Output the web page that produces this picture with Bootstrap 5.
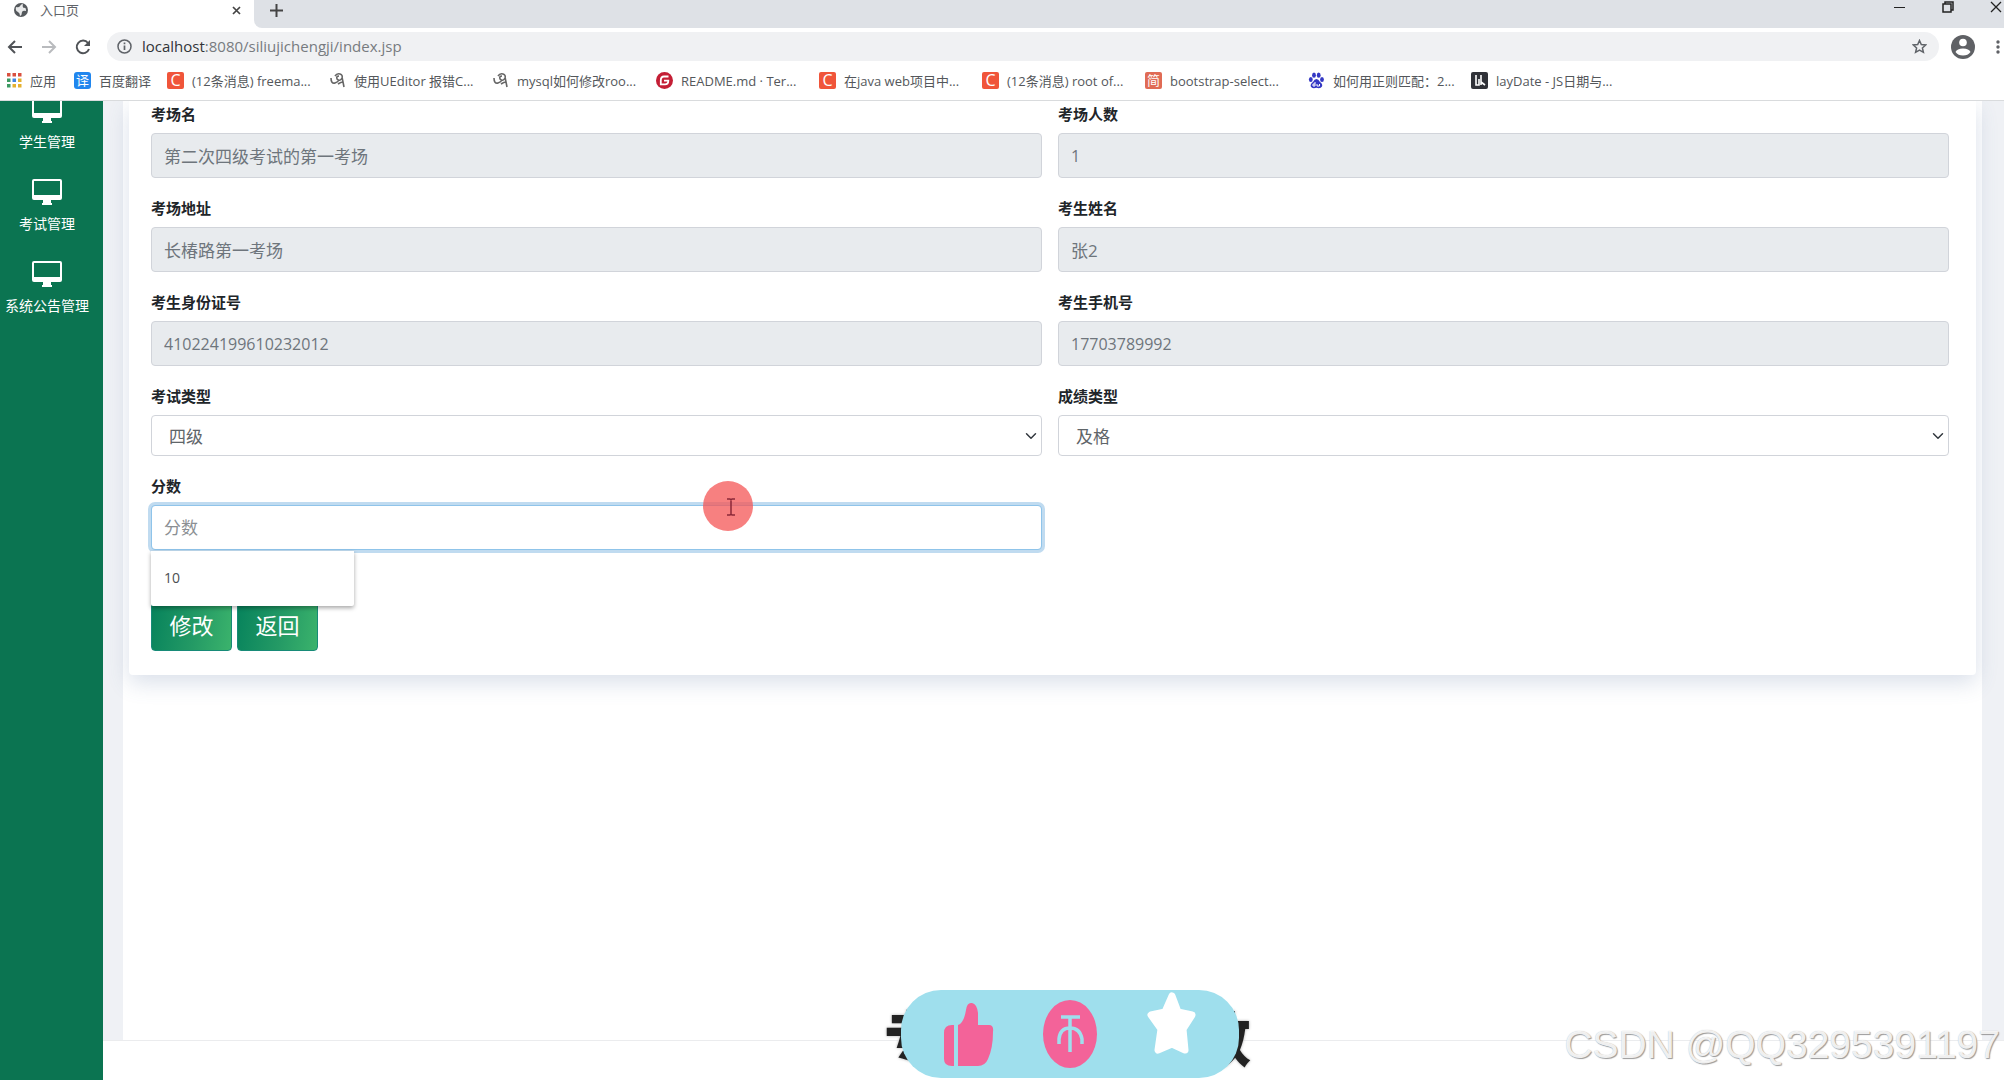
<!DOCTYPE html>
<html lang="zh-CN">
<head>
<meta charset="utf-8">
<meta name="viewport" content="width=device-width, initial-scale=1">
<title>入口页</title>
<link href="https://cdn.jsdelivr.net/npm/bootstrap@5.3.0/dist/css/bootstrap.min.css" rel="stylesheet">
<style>
body { font-family: "Open Sans", "Noto Sans CJK SC", sans-serif; background: #fff; color: #212529; overflow: hidden; }
svg { display: block; flex: none; }
.plain-btn { border: 0; background: none; padding: 0; }
/* browser frame */
.tab-strip { height: 28px; background: #dee1e6; position: relative; }
.tab-active { width: 254px; background: #fff; font-size: 13px; line-height: 20px; color: #5f6368; padding: 0 13px 8px 14px; }
.strip-rest { background: #dee1e6; border-bottom-left-radius: 8px; }
.tab-holder { background: #fff; }
.win-btns { gap: 36px; height: 14px; padding-right: 1px; }
.tool-row { height: 37px; padding: 4px 3px 4px 7px; }
.nav-btns { gap: 18px; width: 100px; }
.url-bar { background: #f0f1f3; border-radius: 15px; padding: 0 12px 0 10px; gap: 10px; }
.url-host { color: #303438; }
.url-text { font-size: 15px; line-height: 29px; color: #777b7f; text-decoration: none; }
.mark-row { height: 36px; padding-left: 7px; border-bottom: 1px solid #d9dbdd; font-size: 13px; line-height: 18px; padding-bottom: 4px; }
.mark-row a { color: #54575b; text-decoration: none; white-space: nowrap; gap: 8px; }
.mark-apps { width: 67px; }
.mark-first { width: 93px; }
.mark-std { width: 163px; }
.fav { width: 17px; height: 17px; line-height: 17px; border-radius: 2px; color: #fff; text-align: center; flex: none; }
.fav-c { background: #f0553a; font-size: 16px; }
.fav-y { background: #2086ee; border-radius: 3px; }
.fav-j { background: #e06b55; }
/* page */
.side-nav { width: 103px; background: #0b7451; }
.side-nav ul { margin-top: -4px; }
.side-nav a { display: flex; flex-direction: column; align-items: center; height: 82px; color: #fff; text-decoration: none; font-size: 14px; line-height: 20px; gap: 9px; padding-right: 9px; white-space: nowrap; }
.page-body { background: #eff1f5; padding: 0 22px 0 20px; }
.frame-area { background: #fff; padding: 0 6px; }
.form-panel { background: #fff; border-radius: 0 0 4px 4px; padding: 2px 27px 24px 22px; box-shadow: 0 8px 22px rgba(70, 100, 150, .2); }
.form-panel .row { --bs-gutter-x: 16px; }
.field { margin-bottom: 19px; position: relative; }
.field label { display: block; font-size: 15px; font-weight: 700; line-height: 22px; margin-bottom: 8px; }
.field .form-control { height: 45px; font-size: 17px; padding: 6px 12px; color: #6e757c; border-color: #d1d4da; border-radius: 4px; }
.field .form-control:disabled { background: #e8ebee; }
.field .digits { font-size: 16px; }
.field .form-control::placeholder { color: #8b8f93; }
.field .active-box { border-color: #8fc4ea; box-shadow: 0 0 0 3px #c0dbf0; }
.field .form-select { height: 41px; font-size: 17px; padding: 6px 24px 4px 17px; color: #5f6569; border-color: #d1d4da; border-radius: 4px; background-position: right 4px center; background-size: 12px; }
.suggest { position: absolute; left: 8px; top: 76px; width: 203px; height: 55px; background: #fff; box-shadow: 0 2px 4px rgba(0, 0, 0, .35); padding: 16px 13px; font-size: 14px; line-height: 22px; color: #4c4f52; z-index: 2; border-radius: 0 0 2px 2px; }
.pointer { position: absolute; left: 61.7%; top: 6px; z-index: 3; }
.actions { padding-top: 33px; gap: 5px; }
.btn-go { width: 81px; height: 49px; font-size: 22px; line-height: 30px; padding: 0 0 3px; color: #fff; border: 1px solid #178b78; border-radius: 4px; background: linear-gradient(100deg, #07835c 0%, #249a65 55%, #3bb36c 100%); }
.btn-go:hover { color: #fff; }
.page-foot { height: 40px; border-top: 1px solid #ebecee; background: #fff; }
/* overlays */
.like-bar { position: absolute; left: 50%; bottom: 2px; margin-left: -118px; width: 367px; height: 88px; }
.like-words { font: 900 60px/92px "Noto Sans CJK SC", sans-serif; color: #222; text-shadow: 0 0 3px #aaa; position: absolute; inset: 0; }
.like-pill { position: absolute; inset: 0 12px 0 17px; background: #9fdfed; border-radius: 40px; }
.stamp { position: absolute; right: 4px; bottom: 13px; font: 39px/44px "Liberation Sans", sans-serif; color: rgba(255, 255, 255, .85); text-shadow: 1px 1px 1px #999, 0 0 1px #bbb; }
</style>
</head>
<body class="vh-100 d-flex flex-column position-relative">
<svg width="0" height="0" class="position-absolute">
  <defs>
    <symbol id="monitor" viewBox="0 0 30 26"><path fill="#fff" fill-rule="evenodd" d="M2 0H28Q30 0 30 2V19Q30 21 28 21H19V24H20V26H10V24H11V21H2Q0 21 0 19V2Q0 0 2 0ZM2 2V16H28V2Z"/></symbol>
    <symbol id="blog" viewBox="0 0 16 17"><path d="M1 6Q1 12 5 11Q8 10 9 8M5 4Q7 1 10 2Q13 3 12 6Q10 10 7 7Q6 4 9 4M12 5Q13 10 14 15M8 12Q11 10 13 10" fill="none" stroke="#666" stroke-width="1.600"/></symbol>
  </defs>
</svg>
<header>
  <div class="tab-strip d-flex">
    <div class="tab-active d-flex align-items-center">
      <svg width="14" height="14" viewBox="0 0 14 14"><circle cx="7" cy="7" r="7" fill="#55595d"/><path d="M2 4Q5 5 6 3Q7 1 9 1Q8 4 10 5Q12 4 12 8Q9 7 8 9Q8 12 6 13Q6 10 4 9Q1 8 2 4Z" fill="#e9eaeb"/></svg>
      <span class="ms-2 ps-1 flex-grow-1">入口页</span>
      <button class="plain-btn" aria-label="关闭标签"><svg width="9" height="9" viewBox="0 0 9 9"><path d="M1 1L8 8M8 1L1 8" stroke="#444" stroke-width="1.700"/></svg></button>
    </div>
    <div class="tab-holder flex-grow-1 d-flex">
      <div class="strip-rest flex-grow-1 d-flex justify-content-between align-items-start ps-3">
        <button class="plain-btn pt-1" aria-label="新标签"><svg width="13" height="13" viewBox="0 0 13 13"><path d="M6.500 0V13M0 6.500H13" stroke="#444" stroke-width="2"/></svg></button>
        <div class="win-btns d-flex align-items-center">
          <button class="plain-btn" aria-label="最小化"><svg width="12" height="12" viewBox="0 0 12 12"><path d="M0 6.500H11" stroke="#222"/></svg></button>
          <button class="plain-btn" aria-label="还原"><svg width="12" height="12" viewBox="0 0 12 12"><path d="M1 3H9V11H1ZM3 3V1H11V9H9" fill="none" stroke="#222" stroke-width="1.500"/></svg></button>
          <button class="plain-btn" aria-label="关闭"><svg width="13" height="12" viewBox="0 0 13 12"><path d="M1 1L11 11M11 1L1 11" stroke="#222" stroke-width="1.300"/></svg></button>
        </div>
      </div>
    </div>
  </div>
  <div class="tool-row d-flex">
    <div class="nav-btns d-flex align-items-center">
      <button class="plain-btn" aria-label="后退"><svg width="16" height="16" viewBox="0 0 16 16"><path d="M15 8H2M8 2L2 8L8 14" fill="none" stroke="#505357" stroke-width="2"/></svg></button>
      <button class="plain-btn" aria-label="前进"><svg width="16" height="16" viewBox="0 0 16 16"><path d="M1 8H14M8 2L14 8L8 14" fill="none" stroke="#b9bbbe" stroke-width="2"/></svg></button>
      <button class="plain-btn" aria-label="刷新"><svg width="16" height="16" viewBox="0 0 16 16"><path d="M13 4A6.300 6.300 0 1 0 14 10" fill="none" stroke="#505357" stroke-width="2"/><path d="M15 1V7H9Z" fill="#505357"/></svg></button>
    </div>
    <div class="url-bar flex-grow-1 d-flex align-items-center">
      <svg width="15" height="15" viewBox="0 0 15 15"><circle cx="7.500" cy="7.500" r="6.500" fill="none" stroke="#5f6368" stroke-width="1.500"/><path d="M7.500 6.500V11M7.500 3.500V5.200" stroke="#5f6368" stroke-width="1.700"/></svg>
      <a class="url-text flex-grow-1" href="#"><span class="url-host">localhost</span>:8080/siliujichengji/index.jsp</a>
      <button class="plain-btn" aria-label="收藏"><svg width="15" height="15" viewBox="0 0 15 15"><path d="M7.500 1.500L9.300 5.600L13.700 6L10.400 8.900L11.400 13.300L7.500 11L3.600 13.300L4.600 8.900L1.300 6L5.700 5.600Z" fill="none" stroke="#5f6368" stroke-width="1.500"/></svg></button>
    </div>
    <div class="d-flex align-items-center ps-2 ms-1 gap-3">
      <button class="plain-btn" aria-label="用户"><svg width="24" height="24" viewBox="0 0 24 24"><circle cx="12" cy="12" r="12" fill="#5f6165"/><circle cx="12" cy="7.500" r="3.800" fill="#fff"/><path d="M4.500 17Q6 13.500 12 13.500T19.500 17Q17 20.500 12 20.500T4.500 17Z" fill="#fff"/></svg></button>
      <button class="plain-btn ps-1" aria-label="菜单"><svg width="6" height="16" viewBox="0 0 6 16"><g fill="#5f6165"><circle cx="3" cy="3" r="1.700"/><circle cx="3" cy="8" r="1.700"/><circle cx="3" cy="13" r="1.700"/></g></svg></button>
    </div>
  </div>
  <nav class="mark-row d-flex align-items-center">
    <a href="#" class="mark-apps d-flex align-items-center"><svg width="15" height="15" viewBox="0 0 15 15"><g fill="#d9503f"><path d="M0 0H3.500V3.500H0ZM5.500 0H9V3.500H5.500ZM11 0H14.500V3.500H11Z"/></g><path fill="#3d9a62" d="M0 5.500H3.500V9H0Z"/><path fill="#4285e0" d="M5.500 5.500H9V9H5.500Z"/><path fill="#e5b12f" d="M11 5.500H14.500V9H11ZM5.500 11H9V14.500H5.500ZM11 11H14.500V14.500H11Z"/><path fill="#3d9a62" d="M0 11H3.500V14.500H0Z"/></svg>应用</a>
    <a href="#" class="mark-first d-flex align-items-center"><span class="fav fav-y">译</span>百度翻译</a>
    <a href="#" class="mark-std d-flex align-items-center"><span class="fav fav-c">C</span>(12条消息) freema...</a>
    <a href="#" class="mark-std d-flex align-items-center"><svg width="16" height="17"><use href="#blog"/></svg>使用UEditor 报错C...</a>
    <a href="#" class="mark-std d-flex align-items-center"><svg width="16" height="17"><use href="#blog"/></svg>mysql如何修改roo...</a>
    <a href="#" class="mark-std d-flex align-items-center"><svg width="17" height="17" viewBox="0 0 17 17"><circle cx="8.500" cy="8.500" r="8.500" fill="#c41e35"/><path d="M12.500 4.500H8Q4.800 4.500 4.800 8.500V12.300H9Q12.300 12.300 12.300 8.700H8" fill="none" stroke="#fff" stroke-width="1.800"/></svg>README.md · Ter...</a>
    <a href="#" class="mark-std d-flex align-items-center"><span class="fav fav-c">C</span>在java web项目中...</a>
    <a href="#" class="mark-std d-flex align-items-center"><span class="fav fav-c">C</span>(12条消息) root of...</a>
    <a href="#" class="mark-std d-flex align-items-center"><span class="fav fav-j">简</span>bootstrap-select...</a>
    <a href="#" class="mark-std d-flex align-items-center"><svg width="17" height="17" viewBox="0 0 17 17"><g fill="#3438c4"><ellipse cx="2.800" cy="7.500" rx="1.900" ry="2.500"/><ellipse cx="6" cy="3.200" rx="1.900" ry="2.600"/><ellipse cx="10.700" cy="3.200" rx="1.900" ry="2.600"/><ellipse cx="14" cy="7.500" rx="1.900" ry="2.500"/><path d="M8.400 7Q10.500 7 12 10Q15 12 14 14.500Q12.500 17 8.400 15.800Q4 17 2.800 14.500Q2 12 5 10Q6.500 7 8.400 7Z"/></g><path d="M7 10V14H5V12H7M9 12V14H11.500V12" stroke="#fff" fill="none"/></svg>如何用正则匹配：2...</a>
    <a href="#" class="mark-std d-flex align-items-center"><svg width="17" height="17" viewBox="0 0 17 17"><rect width="17" height="17" rx="2" fill="#303238"/><path d="M5 3V13H8V7M10 3V13M10 10L14 13" stroke="#fff" stroke-width="1.600" fill="none"/></svg>layDate - JS日期与...</a>
  </nav>
</header>
<div class="d-flex flex-grow-1 overflow-hidden">
  <nav class="side-nav flex-shrink-0 overflow-hidden">
    <ul class="list-unstyled mb-0">
      <li><a href="#"><svg width="30" height="26"><use href="#monitor"/></svg>学生管理</a></li>
      <li><a href="#"><svg width="30" height="26"><use href="#monitor"/></svg>考试管理</a></li>
      <li><a href="#"><svg width="30" height="26"><use href="#monitor"/></svg>系统公告管理</a></li>
    </ul>
  </nav>
  <div class="flex-grow-1 d-flex flex-column">
    <main class="page-body flex-grow-1 d-flex flex-column">
      <div class="frame-area flex-grow-1">
        <form class="form-panel">
          <div class="row">
            <div class="col-6 field"><label for="room">考场名</label><input id="room" class="form-control" value="第二次四级考试的第一考场" disabled></div>
            <div class="col-6 field"><label for="people">考场人数</label><input id="people" class="form-control digits" value="1" disabled></div>
            <div class="col-6 field"><label for="addr">考场地址</label><input id="addr" class="form-control" value="长椿路第一考场" disabled></div>
            <div class="col-6 field"><label for="stu">考生姓名</label><input id="stu" class="form-control" value="张2" disabled></div>
            <div class="col-6 field"><label for="idno">考生身份证号</label><input id="idno" class="form-control digits" value="410224199610232012" disabled></div>
            <div class="col-6 field"><label for="phone">考生手机号</label><input id="phone" class="form-control digits" value="17703789992" disabled></div>
            <div class="col-6 field"><label for="kind">考试类型</label><select id="kind" class="form-select"><option>四级</option><option>六级</option></select></div>
            <div class="col-6 field"><label for="grade">成绩类型</label><select id="grade" class="form-select"><option>及格</option><option>不及格</option></select></div>
            <div class="col-6 field"><label for="score">分数</label><input id="score" class="form-control active-box" placeholder="分数">
              <div class="suggest">10</div>
              <svg class="pointer" width="50" height="50" viewBox="0 0 50 50"><circle cx="25" cy="25" r="25" fill="#f45555" fill-opacity=".75"/><path d="M24 18H27L28 19L29 18H32M28 18V34M24 34H27L28 33L29 34H32" stroke="#8c2838" stroke-width="1.500" fill="none"/></svg>
            </div>
          </div>
          <div class="actions d-flex">
            <button type="button" class="btn btn-go">修改</button>
            <button type="button" class="btn btn-go">返回</button>
          </div>
        </form>
      </div>
    </main>
    <footer class="page-foot"></footer>
  </div>
</div>
<div class="like-bar">
  <div class="like-words d-flex justify-content-between"><span>专</span><span>数</span></div>
  <div class="like-pill">
    <svg class="w-100 h-100" viewBox="0 0 338 88">
      <path fill="#f36399" d="M53 35V76H51Q43 76 43 69V43Q43 35 51 35ZM57 35Q63 33 65 20Q66 12 71 13Q76 14 77 23V35H88Q93 35 92 42Q92 58 87 69Q84 76 77 76H57Z"/>
      <ellipse cx="169" cy="44" rx="27" ry="34" fill="#f36399"/>
      <path d="M160 27H179M169 27V62M158 54V49Q159 38 169 38T181 49V54" fill="none" stroke="#9fdfed" stroke-width="3.500"/>
      <path d="M271 6L277 22L291 25L282 39L284 60L271 54L257 60L260 39L250 25L264 22Z" fill="#fff" stroke="#fff" stroke-width="7" stroke-linejoin="round"/>
    </svg>
  </div>
</div>
<div class="stamp">CSDN @QQ3295391197</div>
<script src="https://cdn.jsdelivr.net/npm/bootstrap@5.3.0/dist/js/bootstrap.bundle.min.js"></script>
</body>
</html>
